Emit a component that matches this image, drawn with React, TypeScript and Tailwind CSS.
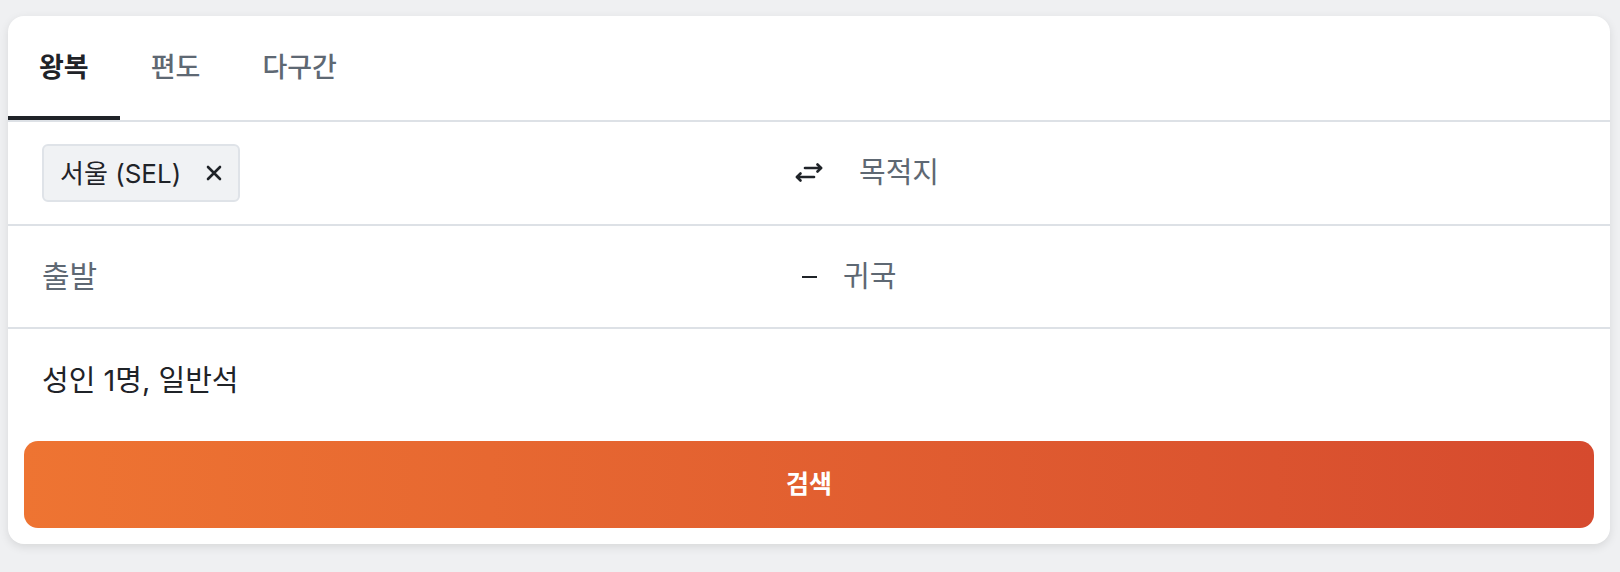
import React, { useState } from 'react';

const tabs = ['왕복', '편도', '다구간'];

function SwapIcon() {
  return (
    <svg width="28" height="20" viewBox="0 0 28 20" fill="none" stroke="#1f2328" strokeWidth="2.6" strokeLinecap="round" strokeLinejoin="round">
      <path d="M10 5h16" />
      <path d="M22.5 1.5 26 5l-3.5 3.5" />
      <path d="M19 14H2" />
      <path d="M5.5 10.5 2 14l3.5 3.5" />
    </svg>
  );
}

function CloseIcon() {
  return (
    <svg width="16" height="16" viewBox="0 0 16 16" fill="none" stroke="#1f2328" strokeWidth="2.6" strokeLinecap="round">
      <path d="M2 2l12 12M14 2 2 14" />
    </svg>
  );
}

export default function App() {
  const [activeTab, setActiveTab] = useState('왕복');
  const [origin, setOrigin] = useState<string | null>('서울 (SEL)');

  return (
    <div className="min-h-[572px] bg-[#eff0f2] pl-2 pt-4" style={{ fontFamily: 'Inter, "Noto Sans CJK KR", "Noto Sans", sans-serif' }}>
      <div className="w-[1602px] h-[528px] bg-white rounded-2xl shadow-[0_3px_10px_rgba(0,0,0,0.10)] overflow-hidden flex flex-col">
        <div className="flex border-b-2 border-[#dde1e6]">
          {tabs.map(tab => (
            <button
              key={tab}
              onClick={() => setActiveTab(tab)}
              className={
                tab === activeTab
                  ? 'h-[104px] px-[31px] pt-1 border-b-4 border-[#1f2328] text-[27px] font-bold text-[#1f2328]'
                  : 'h-[104px] px-[31px] pt-1 border-b-4 border-transparent text-[27px] font-medium text-[#5e6873]'
              }
            >
              {tab}
            </button>
          ))}
        </div>

        <div className="h-[104px] border-b-2 border-[#dde1e6] grid grid-cols-[1fr_28px_1fr] items-center px-[34px]">
          <div className="flex">
            {origin && (
              <div className="h-[58px] flex items-center gap-[25px] pl-[16px] pr-[16px] bg-[#f0f2f4] border-2 border-[#dfe3e8] rounded-md text-[26px] text-[#1f2328]">
                <span>{origin}</span>
                <button onClick={() => setOrigin(null)} className="flex items-center">
                  <CloseIcon />
                </button>
              </div>
            )}
          </div>
          <button className="flex items-center justify-center">
            <SwapIcon />
          </button>
          <div className="pl-[36px] text-[29px] text-[#5e6873]">목적지</div>
        </div>

        <div className="h-[103px] border-b-2 border-[#dde1e6] grid grid-cols-[1fr_28px_1fr] items-center px-[34px]">
          <div className="text-[30px] text-[#5e6873]">출발</div>
          <div className="flex justify-center">
            <span className="block w-[15px] h-[2px] bg-[#1f2328]" />
          </div>
          <div className="pl-[20px] text-[29px] text-[#5e6873]">귀국</div>
        </div>

        <div className="h-[104px] flex items-center px-[34px] text-[29px] text-[#1f2328]">
          성인 1명, 일반석
        </div>

        <div className="px-4 pt-2 pb-4">
          <button className="w-full h-[87px] rounded-[14px] bg-linear-to-r from-[#ee7432] to-[#d64a2e] text-white text-[25px] font-bold">
            검색
          </button>
        </div>
      </div>
    </div>
  );
}
